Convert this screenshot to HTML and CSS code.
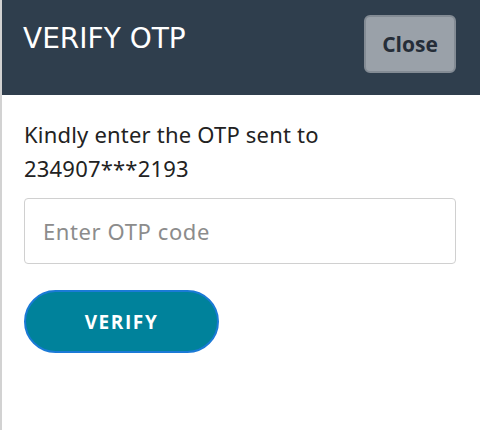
FILE: index.html
```html
<!DOCTYPE html>
<html lang="en">
  <head>
    <meta charset="UTF-8" />
    <meta name="viewport" content="width=device-width, initial-scale=1.0" />
    <title>Verify OTP</title>
    <link rel="stylesheet" href="styles.css">
  </head>
  <body>
    <div class="modal">
      <div class="modal-header">
        <h1>VERIFY OTP</h1>
        <button class="btn-close" type="button">Close</button>
      </div>
      <div class="modal-body">
        <p>Kindly enter the OTP sent to<br>234907***2193</p>
        <input class="otp-input" type="text" placeholder="Enter OTP code" />
        <button class="btn-verify" type="button">VERIFY</button>
      </div>
    </div>
  </body>
</html>
```

FILE: styles.css
```css
* {
  box-sizing: border-box;
}
body {
  margin: 0;
  font-family: "Noto Sans", "Open Sans", Arial, sans-serif;
  background-color: #fff;
}
.modal {
  width: 480px;
  height: 430px;
  border-left: 2px solid #d2d2d2;
}
.modal-header {
  height: 95px;
  background-color: #2f3e4d;
  display: flex;
  justify-content: space-between;
  align-items: flex-start;
  padding: 15px 24px 0 21px;
}
h1 {
  margin: 0;
  padding-top: 7px;
  font-family: "DejaVu Sans", "Noto Sans", sans-serif;
  font-size: 28px;
  font-weight: 400;
  line-height: 1.2;
  color: #fff;
}
.btn-close {
  width: 92px;
  height: 58px;
  background-color: #9aa1a9;
  border: 2px solid #838b94;
  border-radius: 6px;
  font-family: "Open Sans", sans-serif;
  font-size: 21px;
  font-weight: 700;
  color: #252d38;
  padding: 0;
}
.modal-body {
  padding: 22px 24px 0 22px;
}
.modal-body p {
  margin: 0 0 13px;
  font-size: 22px;
  line-height: 34px;
  letter-spacing: 0.2px;
  color: #222;
}
.otp-input {
  display: block;
  width: 432px;
  height: 66px;
  border: 1px solid #d0d0d0;
  border-radius: 4px;
  padding: 0 18px;
  font-family: inherit;
  font-size: 22px;
  letter-spacing: 0.6px;
  color: #333;
}
.otp-input::placeholder {
  color: #8c8c8c;
}
.btn-verify {
  display: block;
  margin-top: 26px;
  width: 195px;
  height: 63px;
  border-radius: 32px;
  background-color: #00829b;
  border: 2px solid #1a7ad6;
  color: #fff;
  font-family: "Open Sans", sans-serif;
  font-size: 19px;
  font-weight: 700;
  letter-spacing: 1.6px;
}
```
